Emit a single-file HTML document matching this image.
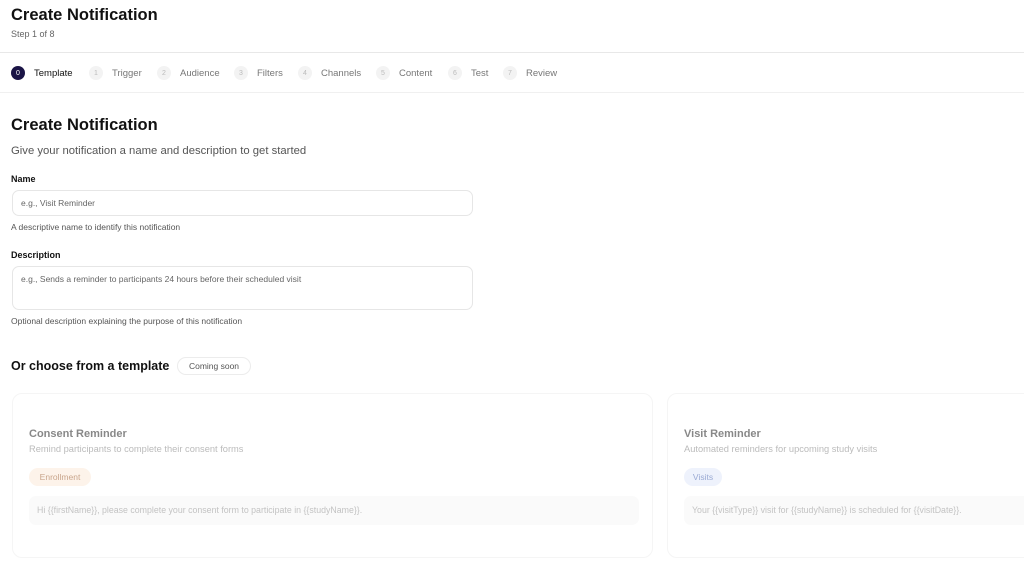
<!DOCTYPE html><html><head><style>
*{box-sizing:border-box;margin:0;padding:0}
body{width:1024px;height:571px;overflow:hidden;background:#fff;font-family:"Liberation Sans",sans-serif;color:#111;position:relative}
.a{position:absolute;white-space:nowrap}
.step{position:absolute;top:65px;height:16px;display:flex;align-items:center;font-size:9.5px;color:#777}
.n{width:14px;height:14px;border-radius:50%;background:#f3f3f3;color:#bbb;font-size:7px;display:flex;align-items:center;justify-content:center;margin-right:9px}
.inp{position:absolute;left:12px;width:461px;border:1px solid #e6e6e6;border-radius:7px;font-size:8.5px;color:#666;padding:0 8px}
.card{position:absolute;top:393px;height:165px;border:1px solid #f5f5f5;border-radius:10px;background:#fff}
</style></head><body>
<div class="a" style="left:11px;top:6px;font-size:16.5px;font-weight:bold">Create Notification</div>
<div class="a" style="left:11px;top:29px;font-size:9px;color:#666">Step 1 of 8</div>
<div class="a" style="left:0;top:52px;width:1024px;height:1px;background:#e8e8e8"></div>
<div class="step" style="left:11px;color:#111"><span class="n" style="background:#1a1446;color:#fff">0</span>Template</div>
<div class="step" style="left:89px"><span class="n">1</span>Trigger</div>
<div class="step" style="left:157px"><span class="n">2</span>Audience</div>
<div class="step" style="left:234px"><span class="n">3</span>Filters</div>
<div class="step" style="left:298px"><span class="n">4</span>Channels</div>
<div class="step" style="left:376px"><span class="n">5</span>Content</div>
<div class="step" style="left:448px"><span class="n">6</span>Test</div>
<div class="step" style="left:503px"><span class="n">7</span>Review</div>
<div class="a" style="left:0;top:92px;width:1024px;height:1px;background:#f0f0f0"></div>
<div class="a" style="left:11px;top:116px;font-size:16.5px;font-weight:bold">Create Notification</div>
<div class="a" style="left:11px;top:145px;font-size:11.3px;color:#555">Give your notification a name and description to get started</div>
<div class="a" style="left:11px;top:174px;font-size:9px;font-weight:bold">Name</div>
<div class="inp" style="top:190px;height:26px;line-height:24px">e.g., Visit Reminder</div>
<div class="a" style="left:11px;top:222px;font-size:8.5px;color:#555">A descriptive name to identify this notification</div>
<div class="a" style="left:11px;top:250px;font-size:9px;font-weight:bold">Description</div>
<div class="inp" style="top:266px;height:44px;padding-top:7px">e.g., Sends a reminder to participants 24 hours before their scheduled visit</div>
<div class="a" style="left:11px;top:316px;font-size:8.5px;color:#555">Optional description explaining the purpose of this notification</div>
<div class="a" style="left:11px;top:359px;font-size:12.5px;font-weight:bold">Or choose from a template</div>
<div class="a" style="left:177px;top:357px;width:74px;height:18px;border:1px solid #ececec;border-radius:9px;font-size:8.5px;color:#555;text-align:center;line-height:16px">Coming soon</div>
<div class="card" style="left:12px;width:641px">
<div class="a" style="left:16px;top:34px;font-size:11px;color:#888;font-weight:bold">Consent Reminder</div>
<div class="a" style="left:16px;top:50px;font-size:9.3px;color:#bbb">Remind participants to complete their consent forms</div>
<div class="a" style="left:16px;top:74px;width:62px;height:18px;border-radius:9px;background:#fdf3ea;color:#c9a58c;font-size:8.5px;text-align:center;line-height:18px">Enrollment</div>
<div class="a" style="left:16px;top:102px;width:610px;height:29px;border-radius:7px;background:#fafafa;color:#c3c3c3;font-size:8.8px;line-height:29px;padding-left:8px">Hi {{firstName}}, please complete your consent form to participate in {{studyName}}.</div>
</div>
<div class="card" style="left:667px;width:400px">
<div class="a" style="left:16px;top:34px;font-size:11px;color:#888;font-weight:bold">Visit Reminder</div>
<div class="a" style="left:16px;top:50px;font-size:9.3px;color:#bbb">Automated reminders for upcoming study visits</div>
<div class="a" style="left:16px;top:74px;width:38px;height:18px;border-radius:9px;background:#eef2fc;color:#9aaad4;font-size:8.5px;text-align:center;line-height:18px">Visits</div>
<div class="a" style="left:16px;top:102px;width:400px;height:29px;border-radius:7px;background:#fafafa;color:#c3c3c3;font-size:8.8px;line-height:29px;padding-left:8px">Your {{visitType}} visit for {{studyName}} is scheduled for {{visitDate}}.</div>
</div>
</body></html>
